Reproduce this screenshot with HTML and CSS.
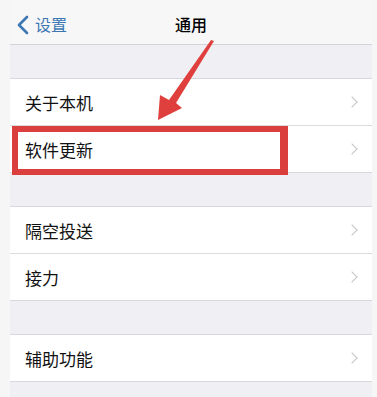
FILE: index.html
```html
<!DOCTYPE html>
<html lang="zh-CN">
<head>
    <meta charset="UTF-8">
    <meta name="viewport" content="width=device-width, initial-scale=1.0">
    <title>通用</title>
    <link rel="stylesheet" href="styles.css">
</head>
<body>
    <div class="screen">
        <!-- Navigation bar -->
        <div class="nav">
            <a class="back" href="#">
                <svg class="back-icon" width="12" height="20" viewBox="0 0 12 20">
                    <path d="M10 2 L2 10 L10 18" fill="none" stroke="#3c77b4" stroke-width="2.6" stroke-linecap="round" stroke-linejoin="round"/>
                </svg>
                <span>设置</span>
            </a>
            <div class="title">通用</div>
        </div>

        <div class="spacer"></div>

        <ul class="group">
            <li class="row"><span>关于本机</span><i class="chevron"></i></li>
            <li class="row"><span>软件更新</span><i class="chevron"></i></li>
        </ul>

        <div class="spacer"></div>

        <ul class="group">
            <li class="row"><span>隔空投送</span><i class="chevron"></i></li>
            <li class="row"><span>接力</span><i class="chevron"></i></li>
        </ul>

        <div class="spacer"></div>

        <ul class="group">
            <li class="row"><span>辅助功能</span><i class="chevron"></i></li>
        </ul>

        <!-- Annotation overlay: red box and arrow -->
        <div class="highlight"></div>
        <svg class="arrow" width="90" height="100" viewBox="0 0 90 100">
            <polygon points="73,0 76,1 38,63 44,68 20,80 22,55 31,60" fill="#e0403d"/>
        </svg>
    </div>
</body>
</html>
```

FILE: styles.css
```css
* {
    box-sizing: border-box;
    margin: 0;
    padding: 0;
}

body {
    font-family: "Noto Sans CJK SC", "Noto Sans", sans-serif;
    background-color: #f6f6f6;
    width: 377px;
    height: 397px;
    overflow: hidden;
}

.screen {
    position: relative;
    margin: 0 5px 0 10px;
    height: 397px;
    background-color: #efeff4;
}

.nav {
    position: relative;
    height: 45px;
    padding-top: 4px;
    background-color: #f7f7f7;
    border-bottom: 1px solid #d4d4d8;
    display: flex;
    align-items: center;
    justify-content: center;
}

.back {
    position: absolute;
    left: 7px;
    top: 4px;
    height: 40px;
    display: flex;
    align-items: center;
    gap: 6px;
    color: #3c77b4;
    text-decoration: none;
    font-size: 16px;
}

.back-icon {
    margin-top: 1px;
}

.title {
    font-size: 16px;
    font-weight: 500;
    color: #000;
}

.spacer {
    height: 33px;
}

.group {
    list-style: none;
    background-color: #fff;
    border-top: 1px solid #d8d8dc;
    border-bottom: 1px solid #d8d8dc;
}

.row {
    height: 47px;
    padding-left: 15px;
    padding-right: 14px;
    display: flex;
    align-items: center;
    justify-content: space-between;
    font-size: 17px;
    color: #111;
}

.row + .row {
    border-top: 1px solid #dcdce0;
}

.group .row:first-child {
    height: 46px;
}

.chevron {
    width: 8px;
    height: 8px;
    border-top: 1.5px solid #c4c4c8;
    border-right: 1.5px solid #c4c4c8;
    transform: rotate(45deg);
    margin-right: 2px;
}

.highlight {
    position: absolute;
    left: 2px;
    top: 126px;
    width: 276px;
    height: 49px;
    border: 6px solid #da3f3d;
    border-right-width: 8px;
}

.arrow {
    position: absolute;
    left: 128px;
    top: 40px;
}
```
